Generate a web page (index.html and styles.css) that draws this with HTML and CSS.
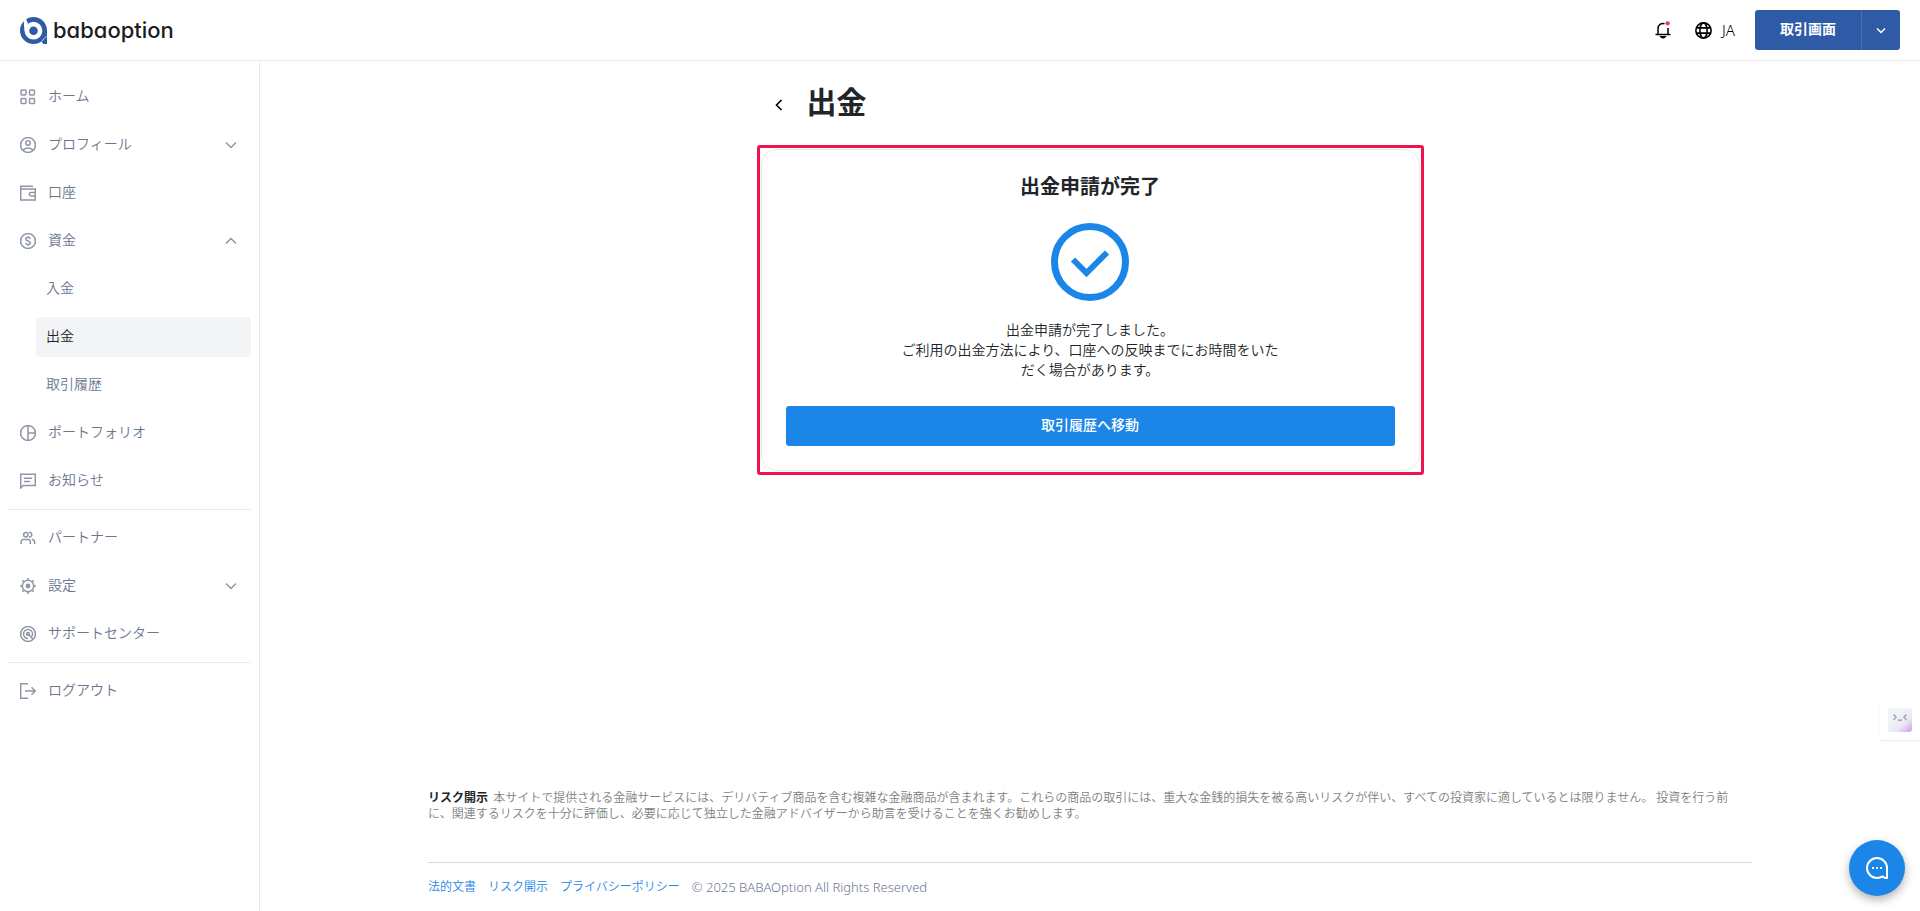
FILE: index.html
```html
<!DOCTYPE html>
<html lang="ja">
<head>
<meta charset="utf-8">
<meta name="viewport" content="width=device-width, initial-scale=1">
<title>出金 | BABAOption</title>
<link rel="stylesheet" href="styles.css">
</head>
<body>
<header class="header">
  <a class="brand" href="#">
    <svg class="brand-mark" viewBox="0 0 27 27" aria-hidden="true">
      <circle cx="13.500" cy="13.500" r="13.500" fill="#2f5aa6"/>
      <path d="M27 13V27H23.500L20.500 23.500Z" fill="#2f5aa6"/>
      <path d="M26.500 19L21.500 24.500" stroke="#fff" stroke-width="0.700"/>
      <circle cx="13.500" cy="13.700" r="6.600" fill="none" stroke="#fff" stroke-width="4.600"/>
      <path d="M3.600 3.200L6.200 1.600Q6.300 4.500 8 6L5.500 14H4.500Z" fill="#fff"/>
    </svg>
    <span class="brand-name">babaoption</span>
  </a>
  <div class="header-tools">
    <button class="tool" type="button" aria-label="通知">
      <svg class="icon-bell" viewBox="0 0 16 18" fill="none" stroke="currentColor" stroke-width="1.500" aria-hidden="true">
        <path d="M.5 13.500H15.500M3 13.300V7.500A5 5 0 0 1 9.500 2.700M13 7V13.300"/>
        <path d="M6 15.700Q8 18 10 15.700Z" fill="currentColor"/>
        <circle cx="12.600" cy="2.300" r="2.100" fill="#f0324f" stroke="none"/>
      </svg>
    </button>
    <button class="tool lang" type="button">
      <svg class="icon-globe" viewBox="0 0 16 16" fill="none" stroke="currentColor" stroke-width="1.500" aria-hidden="true">
        <circle cx="8" cy="8" r="7.200"/><ellipse cx="8" cy="8" rx="3.400" ry="7.200"/><path d="M1.200 5.500H14.800M1.200 10.500H14.800"/>
      </svg>
      JA
    </button>
    <div class="split">
      <button class="split-main" type="button">取引画面</button>
      <button class="split-toggle" type="button" aria-label="メニューを開く">
        <svg class="icon-small" viewBox="0 0 10 10" fill="none" stroke="currentColor" stroke-width="1.500" aria-hidden="true"><path d="M1 3.500L5 7.500L9 3.500"/></svg>
      </button>
    </div>
  </div>
</header>

<div class="shell">
  <nav class="sidebar" aria-label="メイン">
    <a class="nav-item" href="#">
      <svg class="icon" viewBox="0 0 16 16" aria-hidden="true"><rect x="1" y="1" width="5" height="5" rx="1"/><rect x="9.500" y="1" width="5" height="5" rx="1"/><rect x="1" y="9.500" width="5" height="5" rx="1"/><rect x="9.500" y="9.500" width="5" height="5" rx="1"/></svg>
      ホーム
    </a>
    <button class="nav-item" type="button" aria-expanded="false">
      <svg class="icon" viewBox="0 0 16 16" aria-hidden="true"><circle cx="8" cy="8" r="7.400"/><circle cx="8" cy="6" r="2.200"/><path d="M3 13Q8 9 13 13"/></svg>
      プロフィール
      <svg class="chevron" viewBox="0 0 12 12" aria-hidden="true"><path d="M1 3.500L6 8.500L11 3.500"/></svg>
    </button>
    <a class="nav-item" href="#">
      <svg class="icon" viewBox="0 0 16 16" aria-hidden="true"><path d="M13 1.200H.7V15H15.300V4H.7M15 7.500H11A1.700 1.700 0 0 0 11 10.900H15"/></svg>
      口座
    </a>
    <button class="nav-item" type="button" aria-expanded="true">
      <svg class="icon" viewBox="0 0 16 16" aria-hidden="true"><circle cx="8" cy="8" r="7.400"/><path d="M10.300 6C10 4.900 9.200 4.500 8 4.500C6.600 4.500 5.700 5.200 5.700 6.200C5.700 8.600 10.400 7.300 10.400 9.800C10.400 10.900 9.400 11.500 8 11.500C6.700 11.500 5.800 11 5.500 9.900M8 3V4.500M8 11.500V13"/></svg>
      資金
      <svg class="chevron" viewBox="0 0 12 12" aria-hidden="true"><path d="M1 8.500L6 3.500L11 8.500"/></svg>
    </button>
    <a class="nav-item nav-sub" href="#">入金</a>
    <a class="nav-item nav-sub is-active" href="#" aria-current="page">出金</a>
    <a class="nav-item nav-sub" href="#">取引履歴</a>
    <a class="nav-item" href="#">
      <svg class="icon" viewBox="0 0 16 16" aria-hidden="true"><circle cx="8" cy="8" r="7.400"/><path d="M8 .6V15.400M8 8H15.400"/></svg>
      ポートフォリオ
    </a>
    <a class="nav-item" href="#">
      <svg class="icon" viewBox="0 0 16 16" aria-hidden="true"><path d="M.7 15V1.200H15.300V12.500H3.200L.7 15ZM4 5.300H12M4 8.500H10"/></svg>
      お知らせ
    </a>
    <hr class="divider">
    <a class="nav-item" href="#">
      <svg class="icon" viewBox="0 0 16 16" aria-hidden="true"><circle cx="5.800" cy="4.700" r="2.200"/><path d="M9 2.600A2.200 2.200 0 1 1 9 6.800M1.200 14V11.500A2 2 0 0 1 3.200 9.500H8.300A2 2 0 0 1 10.300 11.500V14M12 9.500A2.600 2.600 0 0 1 14.600 12V14"/></svg>
      パートナー
    </a>
    <button class="nav-item" type="button" aria-expanded="false">
      <svg class="icon" viewBox="0 0 16 16" aria-hidden="true"><circle cx="8" cy="8" r="5.700"/><circle cx="8" cy="8" r="1.700" fill="currentColor"/><path d="M8 0V2.600M8 13.400V16M0 8H2.600M13.400 8H16M2.300 2.300L4.100 4.100M11.900 11.900L13.700 13.700M2.300 13.700L4.100 11.900M11.900 4.100L13.700 2.300"/></svg>
      設定
      <svg class="chevron" viewBox="0 0 12 12" aria-hidden="true"><path d="M1 3.500L6 8.500L11 3.500"/></svg>
    </button>
    <a class="nav-item" href="#">
      <svg class="icon" viewBox="0 0 16 16" aria-hidden="true"><circle cx="8" cy="8" r="7.400"/><path d="M8 12.500A4.500 4.500 0 1 1 12.500 8C12.500 9 12.200 9.800 11.700 10.500M7.500 7.500L13 13"/><circle cx="8" cy="8" r="1.400"/></svg>
      サポートセンター
    </a>
    <hr class="divider">
    <a class="nav-item" href="#">
      <svg class="icon" viewBox="0 0 16 16" aria-hidden="true"><path d="M8 .7H.7V15.300H8M5 8H15M11.500 4.300L15.200 8L11.500 11.700"/></svg>
      ログアウト
    </a>
  </nav>

  <div class="page">
    <main class="content">
      <div class="title-row">
        <button class="back" type="button" aria-label="戻る">
          <svg class="icon-back" viewBox="0 0 12 12" fill="none" stroke="currentColor" stroke-width="1.600" aria-hidden="true"><path d="M8.500 1L3.500 6L8.500 11"/></svg>
        </button>
        <h1 class="title">出金</h1>
      </div>
      <div class="highlight">
        <section class="card">
          <h2 class="card-title">出金申請が完了</h2>
          <svg class="card-icon" viewBox="0 0 78 78" fill="none" stroke="currentColor" aria-hidden="true"><circle cx="39" cy="39" r="35.500" stroke-width="7"/><path d="M22 36.500L35.500 50L56 29.500" stroke-width="6"/></svg>
          <p class="card-text">出金申請が完了しました。<br>ご利用の出金方法により、口座への反映までにお時間をいただく場合があります。</p>
          <button class="primary" type="button">取引履歴へ移動</button>
        </section>
      </div>
    </main>
    <footer class="footer">
      <p class="risk"><strong class="risk-label">リスク開示</strong> 本サイトで提供される金融サービスには、デリバティブ商品を含む複雑な金融商品が含まれます。これらの商品の取引には、重大な金銭的損失を被る高いリスクが伴い、すべての投資家に適しているとは限りません。 投資を行う前に、関連するリスクを十分に評価し、必要に応じて独立した金融アドバイザーから助言を受けることを強くお勧めします。</p>
      <div class="legal">
        <a class="legal-link" href="#">法的文書</a>
        <a class="legal-link" href="#">リスク開示</a>
        <a class="legal-link" href="#">プライバシーポリシー</a>
        <span class="copyright">© 2025 BABAOption All Rights Reserved</span>
      </div>
    </footer>
  </div>
</div>

<button class="assistant" type="button" aria-label="アシスタント">
  <svg class="assistant-face" viewBox="0 0 24 24" fill="none" aria-hidden="true">
    <defs><linearGradient id="face" x1="0.400" y1="0.300" x2="1" y2="1"><stop offset="0" stop-color="#eff4f8"/><stop offset="0.500" stop-color="#ece6f5"/><stop offset="1" stop-color="#cb9bea"/></linearGradient></defs>
    <rect width="24" height="24" rx="3" fill="url(#face)"/>
    <path d="M5.500 6.500L8 9.300L5.500 12M18.500 6.500L16 9.300L18.500 12M10.300 11.500Q12 13.500 13.700 11.500" stroke="#a3a6aa" stroke-width="1.500"/>
  </svg>
</button>
<button class="chat" type="button" aria-label="チャット">
  <svg class="chat-icon" viewBox="0 0 24 24" fill="none" stroke="currentColor" stroke-width="2" aria-hidden="true">
    <path d="M22 12A10 10 0 1 0 12 22C14 22 16 21.500 17.500 20.400L20 22H22Z" stroke-linejoin="round"/>
    <path d="M7 12H9M11 12H13M15 12H17"/>
  </svg>
</button>
</body>
</html>
```
FILE: styles.css
```css
* {
  box-sizing: border-box;
}

body {
  margin: 0;
  min-height: 100vh;
  display: flex;
  flex-direction: column;
  background: #fff;
  color: #212529;
  font: 350 14px/20px "Noto Sans", "Noto Sans CJK JP", sans-serif;
}

button {
  font: inherit;
  color: inherit;
  border: 0;
  padding: 0;
  background: none;
  cursor: pointer;
}

a {
  color: inherit;
  text-decoration: none;
}

h1,
h2,
p {
  margin: 0;
}

svg {
  display: block;
  flex: none;
}

.header {
  display: flex;
  align-items: center;
  justify-content: space-between;
  padding: 10px 20px;
  border-bottom: 1px solid #e9eaec;
}

.brand {
  display: flex;
  align-items: center;
  gap: 6px;
}

.brand-mark {
  width: 27px;
  height: 27px;
}

.brand-name {
  color: #1d1d1f;
  font: 500 22px/28px Inter, sans-serif;
  font-feature-settings: "cv11";
}

.header-tools {
  display: flex;
  align-items: center;
  gap: 18px;
}

.tool {
  display: flex;
  align-items: center;
  gap: 10px;
  color: #000;
}

.lang {
  padding: 0 2px 0 6px;
  font-size: 15px;
}

.icon-bell {
  width: 16px;
  height: 18px;
}

.icon-globe {
  width: 17px;
  height: 17px;
}

.icon-small {
  width: 10px;
  height: 10px;
}

.split {
  display: flex;
  height: 40px;
  border-radius: 3px;
  background: #2f5aa6;
  color: #fff;
  font-weight: 700;
}

.split-main {
  padding: 0 25px 3px;
}

.split-toggle {
  display: flex;
  align-items: center;
  justify-content: center;
  width: 39px;
  border-left: 1px solid #4a70b6;
}

.shell {
  display: flex;
  flex: 1;
}

.sidebar {
  display: flex;
  flex-direction: column;
  flex: none;
  gap: 8px;
  width: 260px;
  padding: 16px 8px;
  border-right: 1px solid #e9eaec;
  color: #6b778f;
}

.nav-item {
  display: flex;
  align-items: center;
  gap: 12px;
  height: 40px;
  padding: 0 14px 3px 12px;
  border-radius: 4px;
  text-align: left;
}

.nav-sub {
  margin-left: 28px;
  padding-left: 10px;
}

.is-active {
  background: #f3f4f6;
  color: #212529;
}

.icon,
.chevron {
  width: 16px;
  height: 16px;
  margin-top: 3px;
  fill: none;
  stroke: #8d97a6;
  stroke-width: 1.5;
  color: #8d97a6;
}

.chevron {
  width: 12px;
  height: 12px;
  margin-left: auto;
}

.divider {
  width: 100%;
  height: 1px;
  margin: 0;
  border: 0;
  background: #e9eaec;
}

.page {
  display: flex;
  flex: 1;
  flex-direction: column;
  min-width: 0;
  padding: 23px 24px 14px;
}

.content {
  width: 100%;
  max-width: 667px;
  margin: 0 auto;
}

.title-row {
  display: flex;
  align-items: center;
  gap: 20px;
  padding-left: 16px;
}

.back {
  padding: 5px 0 0;
  color: #000;
}

.icon-back {
  width: 12px;
  height: 12px;
}

.title {
  padding-left: 2px;
  font-size: 30px;
  line-height: 36px;
}

.highlight {
  margin-top: 25px;
  padding: 1px;
  border: 3px solid #ee1450;
  border-radius: 3px;
}

.card {
  display: flex;
  flex-direction: column;
  align-items: center;
  padding: 24px;
  border: 1px solid #e9eaec;
  border-radius: 16px;
}

.card-title {
  font-size: 20px;
  line-height: 26px;
}

.card-icon {
  width: 78px;
  height: 78px;
  margin: 23px 0 19px;
  color: #1c86e8;
}

.card-text {
  max-width: 390px;
  text-align: center;
}

.primary {
  width: 100%;
  height: 40px;
  margin-top: 26px;
  padding-bottom: 3px;
  border-radius: 3px;
  background: #1c86e8;
  color: #fff;
  font-weight: 500;
}

.footer {
  width: 100%;
  max-width: 1324px;
  margin: auto auto 0;
  color: #6b778f;
  font-size: 12px;
  line-height: 16px;
}

.risk {
  padding: 0 8px 40px 0;
  border-bottom: 1px solid #d7dadf;
  color: #7d7f81;
}

.risk-label {
  margin-right: 2px;
  color: #212529;
  font-weight: 700;
}

.legal {
  display: flex;
  flex-wrap: wrap;
  gap: 12px;
  padding: 16px 0 2px;
}

.legal-link {
  color: #1c86e8;
}

.copyright {
  font-size: 13px;
}

.assistant {
  position: fixed;
  right: 0;
  bottom: 171px;
  padding: 8px;
  border-radius: 3px 0 0 3px;
  background: #fff;
  box-shadow: 0 1px 2px rgba(0, 0, 0, 0.08);
}

.assistant-face {
  width: 24px;
  height: 24px;
}

.chat {
  position: fixed;
  right: 15px;
  bottom: 15px;
  display: flex;
  align-items: center;
  justify-content: center;
  width: 56px;
  height: 56px;
  border-radius: 50%;
  background: #1c86e8;
  color: #fff;
  box-shadow: 0 4px 10px rgba(0, 0, 0, 0.3);
}

.chat-icon {
  width: 24px;
  height: 24px;
}
```
